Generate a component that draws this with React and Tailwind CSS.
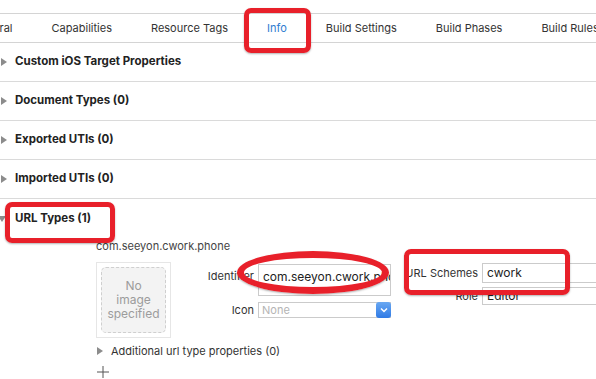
import React from 'react';

const TABS = ['General', 'Capabilities', 'Resource Tags', 'Info', 'Build Settings', 'Build Phases', 'Build Rules'];
const SECTIONS = ['Custom iOS Target Properties', 'Document Types (0)', 'Exported UTIs (0)', 'Imported UTIs (0)'];

// small disclosure triangle, right or down
function Disclosure({ open }) {
  return (
    <svg width="8" height="8" viewBox="0 0 8 8" className="shrink-0">
      {open ? <path d="M0 1 L8 1 L4 7 Z" fill="#8c8c8c" /> : <path d="M1 0 L7 4 L1 8 Z" fill="#8c8c8c" />}
    </svg>
  );
}

function SectionRow({ title }) {
  return (
    <div className="h-[39px] border-b border-[#dadada] flex items-center">
      <Disclosure />
      <span className="ml-[7px] font-bold text-[11.5px] text-[#222]">{title}</span>
    </div>
  );
}

export default function App() {
  return (
    <div className="relative w-[596px] h-[379px] overflow-hidden bg-white font-['Inter','Liberation_Sans',sans-serif] text-[11px] text-[#333]">
      <div className="h-[13px]" />

      {/* tab bar */}
      <div className="h-[30px] border-y border-[#d4d4d4] flex items-center overflow-hidden">
        <div className="flex gap-[39px] whitespace-nowrap -ml-[28px]">
          {TABS.map((t) => (
            <span key={t} className={t === 'Info' ? 'text-[#2f7cd0]' : 'text-[#333]'}>{t}</span>
          ))}
        </div>
      </div>

      {SECTIONS.map((s) => <SectionRow key={s} title={s} />)}

      {/* URL Types, expanded */}
      <div className="h-[39px] flex items-center">
        <div className="-ml-[2px]"><Disclosure open /></div>
        <span className="ml-[9px] font-bold text-[11.5px] text-[#222]">URL Types (1)</span>
      </div>

      <div className="pl-[96px]">
        <div className="h-[16px] leading-[16px] text-[#444]">com.seeyon.cwork.phone</div>

        <div className="flex mt-[8px]">
          {/* image well */}
          <div className="w-[75px] h-[76px] border border-[#e6e6e6] p-[4px] shrink-0">
            <div className="w-full h-full rounded-[5px] border border-dashed border-[#cfcfcf] bg-[#f3f3f3] flex flex-col items-center justify-center text-[#9c9c9c] text-[12px] leading-[14px]">
              <span>No</span>
              <span>image</span>
              <span>specified</span>
            </div>
          </div>

          {/* identifier / icon */}
          <div className="grid grid-cols-[83px_133px] gap-x-[4px] gap-y-[6px] mt-[2px] h-fit">
            <span className="text-right pt-[4px]">Identifier</span>
            <div className="h-[32px] border border-[#cbcbcb] px-[4px] pt-[3px] overflow-hidden whitespace-nowrap text-[12px] text-[#222]">com.seeyon.cwork.phone</div>
            <span className="text-right leading-[16px]">Icon</span>
            <div className="h-[16px] border border-[#cbcbcb] flex items-center">
              <span className="flex-1 px-[3px] text-[#b4b4b4] text-[11px] leading-[14px]">None</span>
              <div className="w-[15px] h-[16px] -mr-px rounded-[3px] bg-gradient-to-b from-[#69a8f2] to-[#2f7ae5] flex items-center justify-center">
                <svg width="8" height="6" viewBox="0 0 8 6">
                  <path d="M1 1.5 L4 4.5 L7 1.5" stroke="#fff" strokeWidth="1.5" fill="none" />
                </svg>
              </div>
            </div>
          </div>

          {/* url schemes / role */}
          <div className="grid grid-cols-[87px_130px] gap-x-[4px] gap-y-[4px] mt-[1px] h-fit">
            <span className="text-right leading-[20px]">URL Schemes</span>
            <div className="h-[20px] border border-[#cbcbcb] px-[4px] flex items-center text-[12px] text-[#222]">cwork</div>
            <span className="text-right leading-[18px]">Role</span>
            <div className="h-[18px] border border-[#cbcbcb] px-[4px] flex items-center text-[12px] text-[#222]">Editor</div>
          </div>
        </div>

        <div className="flex items-center mt-[5px] h-[16px]">
          <Disclosure />
          <span className="ml-[7px] text-[#333]">Additional url type properties (0)</span>
        </div>

        <div className="mt-[5px] h-[16px] flex items-center">
          <svg width="12" height="12" viewBox="0 0 12 12" className="ml-[1px]">
            <path d="M6 0 V12 M0 6 H12" stroke="#555" strokeWidth="1" />
          </svg>
        </div>
      </div>

      {/* red annotation marks */}
      <div className="absolute left-[244px] top-[8px] w-[67px] h-[45px] rounded-[7px] border-[5px] border-[#e8202a] shadow-[0_1px_2px_rgba(0,0,0,0.3)]" />
      <div className="absolute left-[5px] top-[202px] w-[110px] h-[41px] rounded-[7px] border-[5px] border-[#e8202a] shadow-[0_1px_2px_rgba(0,0,0,0.3)]" />
      <div className="absolute left-[404px] top-[249px] w-[166px] h-[46px] rounded-[7px] border-[5px] border-[#e8202a] shadow-[0_1px_2px_rgba(0,0,0,0.3)]" />
      <div className="absolute left-[237px] top-[251px] w-[152px] h-[43px] rounded-[50%] border-[7px] border-[#e8202a] shadow-[0_1px_2px_rgba(0,0,0,0.3)]" />
    </div>
  );
}
